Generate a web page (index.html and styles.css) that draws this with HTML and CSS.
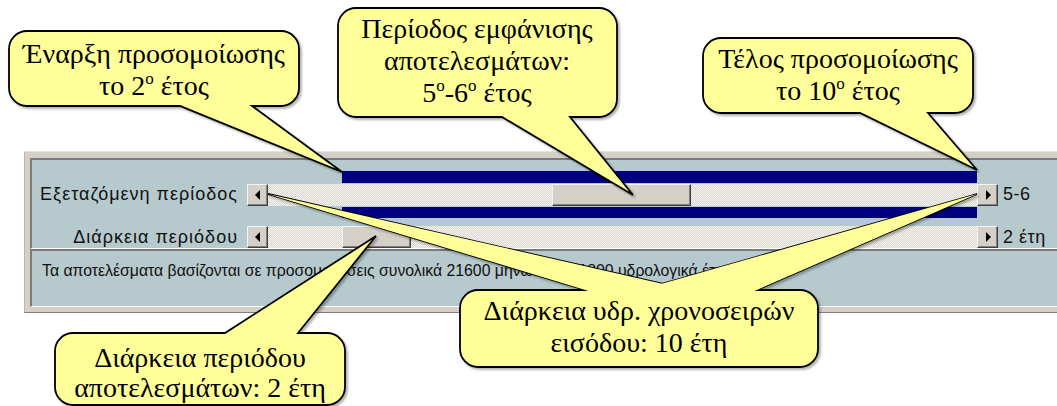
FILE: index.html
```html
<!DOCTYPE html>
<html lang="el">
<head>
    <meta charset="UTF-8">
    <meta name="viewport" content="width=device-width, initial-scale=1.0">
    <title>Περίοδος αποτελεσμάτων</title>
    <link rel="stylesheet" href="styles.css">
</head>
<body>
    <div class="frame">
        <div class="panel panel-sliders">
            <div class="row row-range">
                <div class="label">Εξεταζόμενη περίοδος</div>
                <div class="slider-stack">
                    <div class="range-bar"></div>
                    <div class="scrollbar">
                        <div class="sb-btn"><span class="arrow-left"></span></div>
                        <div class="sb-track"><div class="sb-thumb thumb-period"></div></div>
                        <div class="sb-btn"><span class="arrow-right"></span></div>
                    </div>
                    <div class="range-bar range-bar-bottom"></div>
                </div>
                <div class="value">5-6</div>
            </div>
            <div class="row">
                <div class="label">Διάρκεια περιόδου</div>
                <div class="scrollbar">
                    <div class="sb-btn"><span class="arrow-left"></span></div>
                    <div class="sb-track"><div class="sb-thumb thumb-length"></div></div>
                    <div class="sb-btn"><span class="arrow-right"></span></div>
                </div>
                <div class="value">2 έτη</div>
            </div>
        </div>
        <div class="panel panel-note">
            Τα αποτελέσματα βασίζονται σε προσομοιώσεις συνολικά 21600 μηνών από 1800 υδρολογικά έτη
        </div>
    </div>

    <!-- callouts drawn over the form -->
    <svg class="callouts" width="1057" height="406" viewBox="0 0 1057 406">
        <defs>
            <filter id="shadow" x="-10%" y="-10%" width="130%" height="130%">
                <feDropShadow dx="2" dy="2" stdDeviation="1" flood-color="#000" flood-opacity="0.3"/>
            </filter>
        </defs>

        <g filter="url(#shadow)">
            <path class="bubble" d="M27,31 H281 A18,18 0 0 1 299,49 V88 A18,18 0 0 1 281,106 H252 L342,172 L180,106 H27 A18,18 0 0 1 9,88 V49 A18,18 0 0 1 27,31 Z"/>
            <path class="bubble" d="M356,8 H599 A18,18 0 0 1 617,26 V99 A18,18 0 0 1 599,117 H570 L633,195 L502,117 H356 A18,18 0 0 1 338,99 V26 A18,18 0 0 1 356,8 Z"/>
            <path class="bubble" d="M721,38 H955 A18,18 0 0 1 973,56 V95 A18,18 0 0 1 955,113 H928 L977,170 L860,113 H721 A18,18 0 0 1 703,95 V56 A18,18 0 0 1 721,38 Z"/>
            <path class="bubble" d="M73,333 H225 L376,236 L298,333 H327 A18,18 0 0 1 345,351 V387 A18,18 0 0 1 327,405 H73 A18,18 0 0 1 55,387 V351 A18,18 0 0 1 73,333 Z"/>

            <polygon class="bubble" points="605,296 268,194 716,296"/>
            <polygon class="bubble" points="619,296 977,194 743,296"/>
            <rect class="bubble" x="460" y="290" width="358" height="77" rx="18" ry="18"/>
            <polygon class="bubble-fill" points="605,296 268,194 716,296"/>
            <polygon class="bubble-fill" points="619,296 977,194 743,296"/>
        </g>

        <text class="note" x="154" y="63">Έναρξη προσομοίωσης</text>
        <text class="note" x="154" y="95">το 2<tspan class="sup" dy="-11">ο</tspan><tspan dy="11"> έτος</tspan></text>

        <text class="note" x="477" y="38">Περίοδος εμφάνισης</text>
        <text class="note" x="477" y="70">αποτελεσμάτων:</text>
        <text class="note" x="477" y="102">5<tspan class="sup" dy="-11">ο</tspan><tspan dy="11">-6</tspan><tspan class="sup" dy="-11">ο</tspan><tspan dy="11"> έτος</tspan></text>

        <text class="note" x="838" y="68">Τέλος προσομοίωσης</text>
        <text class="note" x="838" y="100">το 10<tspan class="sup" dy="-11">ο</tspan><tspan dy="11"> έτος</tspan></text>

        <text class="note" x="200" y="367">Διάρκεια περιόδου</text>
        <text class="note" x="200" y="397">αποτελεσμάτων: 2 έτη</text>

        <text class="note" x="639" y="320">Διάρκεια υδρ. χρονοσειρών</text>
        <text class="note" x="639" y="352">εισόδου: 10 έτη</text>
    </svg>
</body>
</html>
```

FILE: styles.css
```css
body {
    margin: 0;
    width: 1057px;
    height: 406px;
    overflow: hidden;
    position: relative;
    background-color: #fff;
    font-family: "Liberation Sans", Arial, sans-serif;
}
.frame {
    margin: 151px 0 0 24px;
    width: 1027px;
    padding: 6px 0 5px 5px;
    background-color: #d4d0c8;
    border-top: 1px solid #e6e4df;
    border-left: 1px solid #b9b7b1;
    border-bottom: 1px solid #808080;
}
.panel {
    background-color: #b6cacd;
    border-top: 2px solid #7b7b7b;
    border-left: 2px solid #7b7b7b;
    border-bottom: 1px solid #fff;
}
.panel-sliders {
    display: flex;
    flex-direction: column;
    gap: 8px;
    padding-top: 11px;
}
.row {
    display: flex;
    align-items: center;
}
.label {
    width: 215px;
    padding-right: 9px;
    box-sizing: border-box;
    text-align: right;
    white-space: nowrap;
    font-size: 18px;
    letter-spacing: 1px;
    color: #111;
}
.value {
    padding-left: 5px;
    font-size: 18px;
    letter-spacing: 0.5px;
    white-space: nowrap;
    color: #111;
}
.slider-stack {
    display: flex;
    flex-direction: column;
    width: 751px;
}
.range-bar {
    height: 12px;
    margin: 0 21px 1px 95px;
    background-color: #000080;
}
.range-bar-bottom {
    height: 11px;
    margin: 1px 21px 0 95px;
}
.scrollbar {
    display: flex;
    width: 751px;
    height: 22px;
}
.sb-btn,
.sb-thumb {
    box-sizing: border-box;
    background-color: #d4d0c8;
    border: 1px solid;
    border-color: #f4f3f0 #404040 #404040 #f4f3f0;
    box-shadow: inset -1px -1px #808080;
}
.sb-btn {
    width: 21px;
    height: 22px;
    display: flex;
    align-items: center;
    justify-content: center;
}
.arrow-left {
    border-right: 5px solid #000;
    border-top: 5px solid transparent;
    border-bottom: 5px solid transparent;
    margin-right: 1px;
}
.arrow-right {
    border-left: 5px solid #000;
    border-top: 5px solid transparent;
    border-bottom: 5px solid transparent;
    margin-left: 1px;
}
.sb-track {
    flex: 1;
    display: flex;
    background-color: #e8e6e1;
    background-image: repeating-conic-gradient(#d9d6cf 0 25%, #f5f4f0 0 50%);
    background-size: 2px 2px;
}
.sb-thumb {
    height: 22px;
}
.thumb-period {
    margin-left: 40%;
    width: 19.7%;
}
.thumb-length {
    margin-left: 10.5%;
    width: 9.6%;
}
.panel-note {
    padding: 10px 0 0 10px;
    height: 45px;
    font-size: 15.8px;
    line-height: 20px;
    white-space: nowrap;
    color: #111;
}
.callouts {
    position: absolute;
    top: 0;
    left: 0;
    pointer-events: none;
}
.bubble {
    fill: #ffff99;
    stroke: #000;
    stroke-width: 1.8;
    stroke-linejoin: miter;
}
.bubble-fill {
    fill: #ffff99;
}
.note {
    font-family: "Liberation Serif", "Times New Roman", serif;
    font-size: 28px;
    text-anchor: middle;
    fill: #000;
}
.sup {
    font-size: 17px;
}
```
